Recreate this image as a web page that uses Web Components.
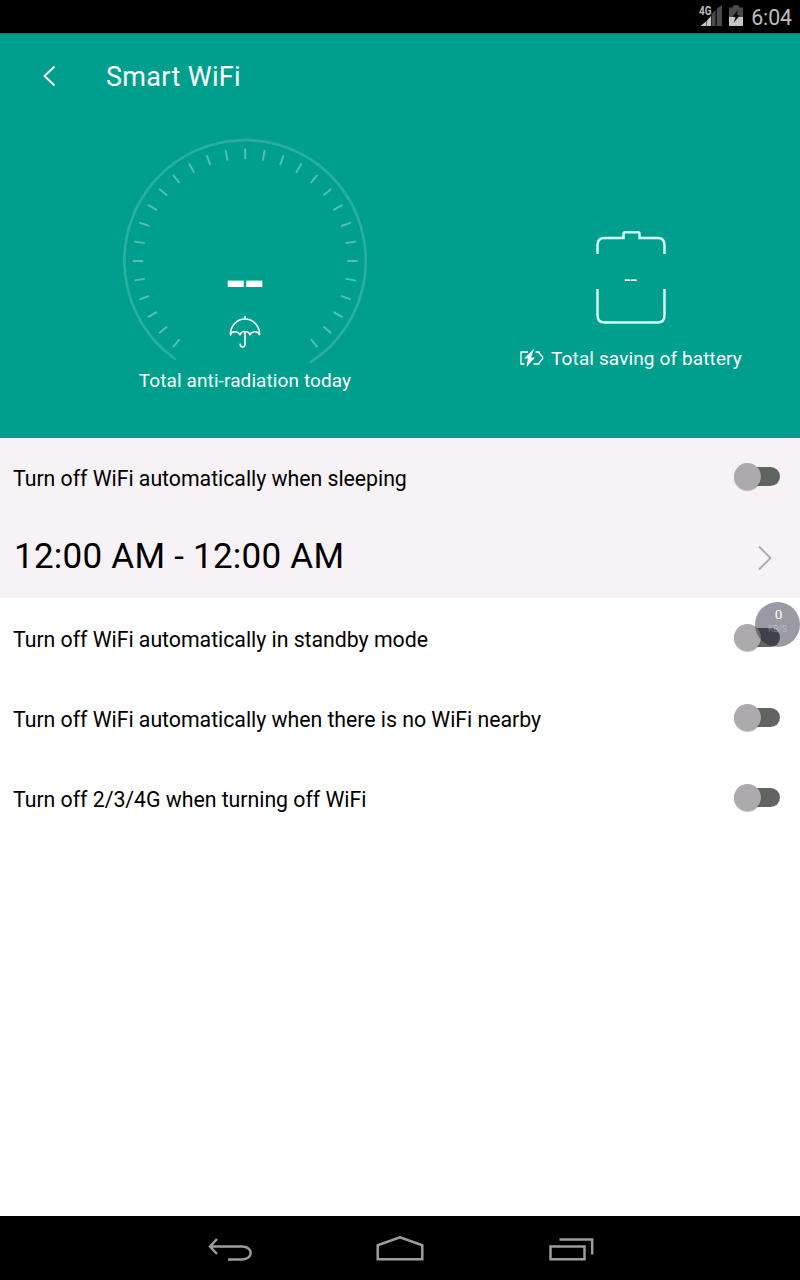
<!DOCTYPE html>
<html lang="en">
<head>
<meta charset="utf-8">
<title>Smart WiFi</title>
<style>
body{margin:0;width:800px;height:1280px;overflow:hidden;background:#fff;font-family:Roboto,"Noto Sans",sans-serif;color:#000}
</style>
</head>
<body>
<wifi-app></wifi-app>
<script>
const define = (name, html) => {
  const t = document.createElement('template');
  t.innerHTML = '<style>*{box-sizing:border-box}svg{display:block;flex:none}</style>' + html;
  customElements.define(name, class extends HTMLElement {
    constructor() {
      super();
      this.attachShadow({mode: 'open'}).append(t.content.cloneNode(true));
    }
  });
};

define('status-bar', `
<style>:host{display:flex;height:33px;background:#000;color:#bebebe;align-items:center;justify-content:flex-end;padding-right:8px}
.t{font-size:21.3px;line-height:25px;padding-top:2px;letter-spacing:-.05px}.net{margin-right:6px}.bat{margin-right:8px}</style>
<svg class="net" width="24" height="33" viewBox="0 0 24 33">
<path d="M8 26V20.500L12 16V26ZM1.500 26L7.500 21V26Z" fill="#c6c6c6"/>
<path d="M12.500 26V14.500L16.500 10V26ZM17.700 26V8.700L23 5V26Z" fill="#4b4b4b"/>
<text x="0" y="15" font-size="12.500" font-weight="700" fill="#bdbdbd" textLength="12.500" lengthAdjust="spacingAndGlyphs">4G</text></svg>
<svg class="bat" width="14" height="33" viewBox="0 0 14 33"><path d="M0 7.500H4V5.300H10V7.500H14V17H0Z" fill="#4b4b4b"/><path d="M0 17H14V26H0Z" fill="#c6c6c6"/><path d="M9.500 9.500L3.500 16.500L6.500 17.500L4.500 23L10.800 15.500L7.800 14.500Z" fill="#0b0b0b"/></svg>
<span class="t">6:04</span>`);

define('title-bar', `
<style>:host{display:flex;align-items:center;height:88px;padding-left:42px;color:#fff;font-size:27px;line-height:32px}
svg{margin:-2px 49px 0 0}span{white-space:nowrap;letter-spacing:.32px}</style>
<svg width="15" height="22" viewBox="0 0 15 22" fill="none" stroke="#fff" stroke-width="1.900"><path d="M12.500 1.500L2.500 11L12.500 20.500"/></svg>
<span><slot></slot></span>`);

customElements.define('radiation-gauge', class extends HTMLElement {
  constructor() {
    super();
    let ticks = '';
    for (let a = -140; a <= 140; a += 10)
      ticks += `<path d="M122.200 11.300V20.300" transform="rotate(${a} 122.200 123)"/>`;
    this.attachShadow({mode: 'open'}).innerHTML = `
<style>:host{display:grid;width:244px;justify-items:center;color:#fff}
svg{display:block}.dial{grid-area:1/1}
.in{grid-area:1/1;display:flex;flex-direction:column;align-items:center}
.v{margin-top:120px;height:46px;line-height:46px;font-size:58px;font-weight:700;letter-spacing:-4.4px;transform:translateX(-2px) scaleX(1)}
.u{margin-top:11px}
.l{font-size:19px;line-height:24px;white-space:nowrap;letter-spacing:.1px;margin-top:20px}</style>
<svg class="dial" width="244" height="228" viewBox="0 0 244 228" fill="none">
<path d="M52 221A120.700 120.700 0 1 1 187.800 224" stroke="#fff" stroke-opacity=".16" stroke-width="2.700" stroke-linecap="round"/>
<g stroke="#55c0b4" stroke-width="1.900" stroke-linecap="round">${ticks}</g></svg>
<div class="in"><div class="v">--</div>
<svg class="u" width="32" height="34" viewBox="0 0 32 34" fill="none" stroke="#fff" stroke-width="1.600" stroke-linecap="round"><path d="M16 1.500V4M1.500 20C1 12 7 4 16 4S31 12 30.500 20C29.500 15.800 23.500 15.800 21 19.500C19.500 15.500 12.500 15.500 11 19.500C8.500 15.800 2.500 15.800 1.500 20M16 17V29.500C16 32.800 11.200 32.800 11.200 29.300"/></svg>
<div class="l"><slot></slot></div></div>`;
  }
});

define('battery-saving', `
<style>:host{display:flex;flex-direction:column;align-items:center;width:224px;color:#fff}
.b{display:grid;place-items:center}.b>*{grid-area:1/1}.v{font-size:20px;line-height:20px;transform:scaleX(1.15);margin-top:2px}
.l{display:flex;align-items:center;gap:7px;margin-top:22px;font-size:19px;line-height:24px;white-space:nowrap;letter-spacing:.12px}.l svg{margin-top:-2px}</style>
<div class="b"><svg width="72" height="95" viewBox="0 0 72 95" fill="none" stroke="#d5fffa" stroke-width="2.500"><path d="M2.500 24V15Q2.500 8 9.500 8H28.500V4Q28.500 2.300 30 2.300H43Q44.500 2.300 44.500 4V8H62.500Q69.500 8 69.500 15V24M2.500 59V85Q2.500 92.500 9.500 92.500H62.500Q69.500 92.500 69.500 85V59"/></svg><span class="v">--</span></div>
<div class="l"><svg width="24" height="20" viewBox="0 0 24 20"><path d="M8 4H1V16H4.500M13.500 16H19V15L22.700 10.500V9L19 5V4H15.500" fill="none" stroke="#fff" stroke-width="1.300"/><path d="M14.300 .500L4 10.500H8L6.500 19L15 9.500H11Z" fill="#fff"/></svg><span><slot></slot></span></div>`);

define('toggle-switch', `
<style>:host{display:grid;flex:none;width:46px;height:28px;align-items:center}
.t{grid-area:1/1;justify-self:end;width:34px;height:19px;border-radius:9.5px;background:#60645f;margin-bottom:1px}
.k{grid-area:1/1;width:27px;height:27px;border-radius:50%;background:#acaaad;box-shadow:0 1px 1px rgba(0,0,0,.25)}</style>
<div class="t"></div><div class="k"></div>`);

define('setting-row', `
<style>:host{display:flex;align-items:center;justify-content:space-between;height:80px;padding:0 20px 3px 13px;font-size:21.3px;line-height:26px}
span{white-space:nowrap;letter-spacing:-.03px;margin-top:4px}</style>
<span><slot></slot></span><toggle-switch></toggle-switch>`);

define('time-row', `
<style>:host{display:flex;align-items:center;justify-content:space-between;height:80px;padding:0 27px 0 14px;font-size:35px;line-height:42px}
span{white-space:nowrap;letter-spacing:.25px;margin-top:-3px}</style>
<span><slot></slot></span><svg width="16" height="26" viewBox="0 0 16 26" fill="none" stroke="#a9a7aa" stroke-width="1.900"><path d="M2 1.500L13.500 13L2 24.500"/></svg>`);

define('speed-bubble', `
<style>:host{position:absolute;left:755px;top:602px;width:45px;height:45px;border-radius:50%;background:rgba(24,20,44,.43);display:flex;flex-direction:column;align-items:center;color:#fff;overflow:hidden}
b{font-weight:400;font-size:13.5px;line-height:15px;margin-top:5px;padding-left:2px}i{font-style:normal;font-size:8.5px;line-height:10px;margin-top:2px;color:rgba(255,255,255,.3)}</style>
<b>0</b><i>KB/S</i>`);

define('nav-bar', `
<style>:host{display:flex;align-items:center;height:64px;background:#000;padding:0 0 0 207px}
.h{margin-left:123px}.r{margin-left:122px}</style>
<svg width="46" height="28" viewBox="0 0 46 28" fill="none" stroke="#9c9c9c" stroke-width="2.500"><path d="M2.500 12.500H35C46.500 12.500 46.500 25.400 35 25.400H21M10 5L3 12.500L10 20"/></svg>
<svg class="h" width="48" height="28" viewBox="0 0 48 28" fill="none" stroke="#9c9c9c" stroke-width="2.500"><path d="M1.700 25.300V11.200L24 3.300L46.300 11.200V25.300Z"/></svg>
<svg class="r" width="50" height="28" viewBox="0 0 50 28" fill="none" stroke="#9c9c9c" stroke-width="2.500"><path d="M4.500 12.400H38.500V25.300H4.500ZM13.500 5.600H46.200V20.500"/></svg>`);

define('wifi-app', `
<style>:host{display:flex;flex-direction:column;width:800px;height:1280px;position:relative}
.hero{height:405px;background:#009f8d;box-shadow:inset 0 2px 2px -1px rgba(0,60,60,.4)}
.stats{display:flex;align-items:flex-start;padding:17px 57px 0 123px;justify-content:space-between}
battery-saving{margin-top:92px}
.sleep{background:#f6f2f6}main{flex:1}.rows{padding-top:1px}</style>
<status-bar></status-bar>
<section class="hero"><title-bar>Smart WiFi</title-bar>
<div class="stats"><radiation-gauge>Total anti-radiation today</radiation-gauge><battery-saving>Total saving of battery</battery-saving></div></section>
<main><section class="sleep"><setting-row>Turn off WiFi automatically when sleeping</setting-row><time-row>12:00 AM - 12:00 AM</time-row></section>
<section class="rows"><setting-row>Turn off WiFi automatically in standby mode</setting-row><setting-row>Turn off WiFi automatically when there is no WiFi nearby</setting-row><setting-row>Turn off 2/3/4G when turning off WiFi</setting-row></section></main>
<nav-bar></nav-bar><speed-bubble></speed-bubble>`);
</script>
</body>
</html>
